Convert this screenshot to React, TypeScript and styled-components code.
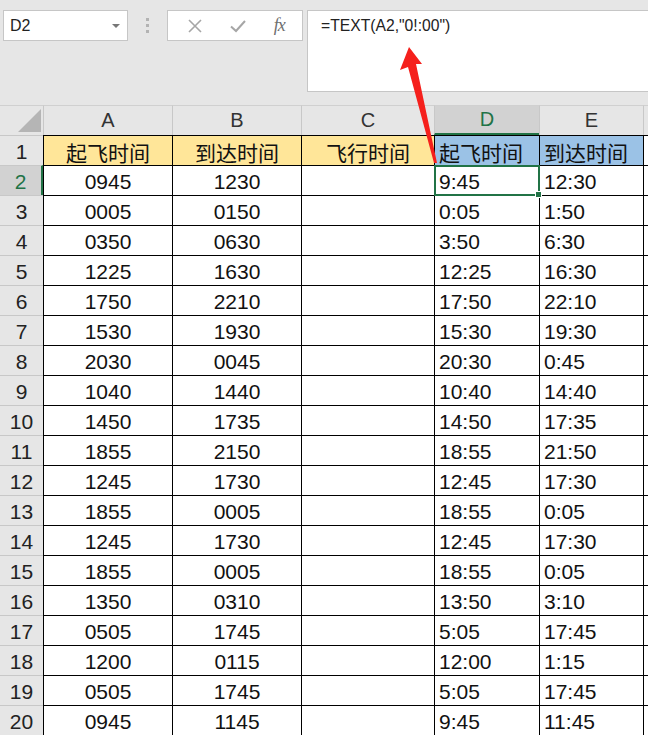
import React from 'react';
import styled, { createGlobalStyle, css } from 'styled-components';

const GREEN = '#217346';
const CELL_FONT = `"Liberation Sans", "Noto Sans CJK SC", sans-serif`;

const GlobalStyle = createGlobalStyle`
  html, body {
    margin: 0;
    padding: 0;
    background: #ffffff;
  }
  body {
    font-family: ${CELL_FONT};
  }
`;

const Page = styled.div`
  position: relative;
  width: 648px;
  height: 735px;
  overflow: hidden;
  background: #e6e6e6;
`;

const FormulaBar = styled.div`
  display: flex;
  align-items: flex-start;
  height: 105px;
  padding: 10px 0 0 3px;
  box-sizing: border-box;
`;

const NameBox = styled.div`
  position: relative;
  width: 125px;
  height: 31px;
  box-sizing: border-box;
  background: #fff;
  border: 1px solid #c6c6c6;
  display: flex;
  align-items: center;
  padding-left: 6px;
  font-size: 16px;
  color: #222;
`;

const DropArrow = styled.span`
  margin-left: auto;
  margin-right: 7px;
  width: 0;
  height: 0;
  border-left: 4px solid transparent;
  border-right: 4px solid transparent;
  border-top: 4px solid #777;
`;

const Dots = styled.div`
  width: 39px;
  height: 31px;
  display: flex;
  flex-direction: column;
  align-items: center;
  justify-content: center;
  gap: 3px;
  & > span {
    width: 3px;
    height: 3px;
    background: #b3b3b3;
  }
`;

const ButtonBox = styled.div`
  width: 136px;
  height: 31px;
  box-sizing: border-box;
  background: #fff;
  border: 1px solid #c6c6c6;
  display: flex;
  align-items: center;
  justify-content: space-around;
  padding: 0 4px 0 6px;
`;

const FxLabel = styled.span`
  font-family: "Liberation Serif", serif;
  font-style: italic;
  font-size: 18px;
  color: #6f6f6f;
  letter-spacing: -1px;
`;

const FormulaInput = styled.div`
  margin-left: 4px;
  flex: 1;
  height: 82px;
  box-sizing: border-box;
  background: #fff;
  border: 1px solid #c6c6c6;
  border-right: none;
  padding: 6px 0 0 13px;
  font-size: 15.7px;
  color: #222;
`;

const Sheet = styled.div`
  display: grid;
  grid-template-columns: 43px 129px 129px 133px 105px 104px 1fr;
  grid-auto-rows: 30px;
`;

const Corner = styled.div`
  background: #e6e6e6;
  position: relative;
  border-top: 1px solid #d0d0d0;
  &::after {
    content: '';
    position: absolute;
    right: 2px;
    bottom: 3px;
    width: 0;
    height: 0;
    border-left: 23px solid transparent;
    border-bottom: 23px solid #b5b5b5;
  }
`;

const ColHead = styled.div<{ $active?: boolean }>`
  background: #e6e6e6;
  border-left: 1px solid #c8c8c8;
  border-top: 1px solid #d0d0d0;
  display: flex;
  align-items: center;
  justify-content: center;
  font-size: 20px;
  color: #333;
  box-sizing: border-box;
  ${({ $active }) =>
    $active &&
    css`
      background: #d2d2d2;
      color: ${GREEN};
      border-bottom: 2px solid ${GREEN};
    `}
`;

const RowHead = styled.div<{ $active?: boolean }>`
  background: #e6e6e6;
  border-top: 1px solid #c8c8c8;
  display: flex;
  align-items: center;
  justify-content: center;
  padding-top: 2px;
  font-size: 21px;
  color: #222;
  box-sizing: border-box;
  ${({ $active }) =>
    $active &&
    css`
      background: #d2d2d2;
      color: ${GREEN};
      border-right: 2px solid ${GREEN};
    `}
`;

const Cell = styled.div<{ $fill?: string; $left?: boolean; $selected?: boolean }>`
  position: relative;
  background: ${({ $fill }) => $fill || '#fff'};
  border-left: 1px solid #000;
  border-top: 1px solid #000;
  display: flex;
  align-items: center;
  justify-content: ${({ $left }) => ($left ? 'flex-start' : 'center')};
  padding: 3px 0 0 ${({ $left }) => ($left ? '4px' : '0')};
  font-size: 21px;
  color: #111;
  white-space: nowrap;
  overflow: hidden;
  box-sizing: border-box;
  ${({ $selected }) =>
    $selected &&
    css`
      overflow: visible;
      &::before {
        content: '';
        position: absolute;
        left: -1px;
        top: -1px;
        right: -1px;
        bottom: -1px;
        border: 2px solid ${GREEN};
        z-index: 2;
      }
      &::after {
        content: '';
        position: absolute;
        right: -3px;
        bottom: -3px;
        width: 5px;
        height: 5px;
        background: ${GREEN};
        border: 1px solid #fff;
        z-index: 3;
      }
    `}
`;

const Filler = styled.div<{ $head?: boolean }>`
  background: ${({ $head }) => ($head ? '#e6e6e6' : '#fff')};
  border-left: 1px solid ${({ $head }) => ($head ? '#c8c8c8' : '#000')};
  border-top: 1px solid ${({ $head }) => ($head ? '#d0d0d0' : '#000')};
`;

const ArrowLayer = styled.svg`
  position: absolute;
  left: 0;
  top: 0;
  pointer-events: none;
  z-index: 10;
`;

const departures = [
  '0945', '0005', '0350', '1225', '1750', '1530', '2030', '1040', '1450', '1855',
  '1245', '1855', '1245', '1855', '1350', '0505', '1200', '0505', '0945',
];
const arrivals = [
  '1230', '0150', '0630', '1630', '2210', '1930', '0045', '1440', '1735', '2150',
  '1730', '0005', '1730', '0005', '0310', '1745', '0115', '1745', '1145',
];

const asTime = (s: string) => `${Number(s.slice(0, 2))}:${s.slice(2)}`;

const YELLOW = '#ffe699';
const BLUE = '#9bc2e6';

const App = () => (
  <Page>
    <GlobalStyle />
    <FormulaBar>
      <NameBox>
        D2
        <DropArrow />
      </NameBox>
      <Dots>
        <span />
        <span />
        <span />
      </Dots>
      <ButtonBox>
        <svg width="16" height="16" viewBox="0 0 16 16">
          <path d="M2 2 L14 14 M14 2 L2 14" stroke="#a6a6a6" strokeWidth="1.6" fill="none" />
        </svg>
        <svg width="18" height="16" viewBox="0 0 18 16">
          <path d="M2 8.5 L7 13 L16 3" stroke="#a6a6a6" strokeWidth="2" fill="none" />
        </svg>
        <FxLabel>fx</FxLabel>
      </ButtonBox>
      <FormulaInput>=TEXT(A2,"0!:00")</FormulaInput>
    </FormulaBar>

    <Sheet>
      <Corner />
      {['A', 'B', 'C', 'D', 'E'].map(c => (
        <ColHead key={c} $active={c === 'D'}>
          {c}
        </ColHead>
      ))}
      <Filler $head />

      <RowHead>1</RowHead>
      <Cell $fill={YELLOW}>起飞时间</Cell>
      <Cell $fill={YELLOW}>到达时间</Cell>
      <Cell $fill={YELLOW}>飞行时间</Cell>
      <Cell $fill={BLUE} $left>
        起飞时间
      </Cell>
      <Cell $fill={BLUE} $left>
        到达时间
      </Cell>
      <Filler />

      {departures.map((dep, i) => (
        <React.Fragment key={i}>
          <RowHead $active={i === 0}>{i + 2}</RowHead>
          <Cell>{dep}</Cell>
          <Cell>{arrivals[i]}</Cell>
          <Cell />
          <Cell $left $selected={i === 0}>
            {asTime(dep)}
          </Cell>
          <Cell $left>{asTime(arrivals[i])}</Cell>
          <Filler />
        </React.Fragment>
      ))}
    </Sheet>

    <ArrowLayer width="648" height="735" viewBox="0 0 648 735">
      <polygon
        points="409,47 422,64 416,64 437,163 434,163 408,67 400,70"
        fill="#f5201c"
      />
    </ArrowLayer>
  </Page>
);

export default App;
